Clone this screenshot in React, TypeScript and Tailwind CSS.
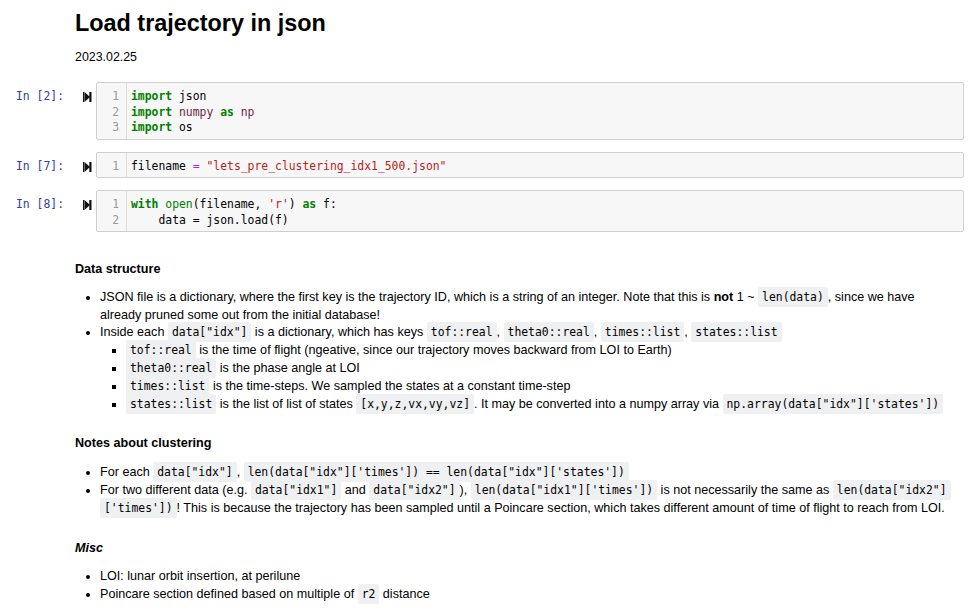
import React from "react";

const mono = "font-['DejaVu_Sans_Mono',monospace]";

function C({ children }: { children: React.ReactNode }) {
  return (
    <code className={`${mono} text-[11.4px] leading-none bg-[#eff0f1] px-[4px] py-[3px] rounded-[2px] text-black`}>
      {children}
    </code>
  );
}

function RunIcon() {
  return (
    <svg width="9" height="10" viewBox="0 0 9 10" className="mt-[4px]">
      <rect x="0" y="0" width="1.2" height="10" fill="#111" />
      <path d="M1.5 0 L7 5 L1.5 10 Z" fill="#111" />
      <rect x="6.3" y="0" width="2.2" height="10" fill="#111" />
    </svg>
  );
}

function Cell({ n, lines }: { n: number; lines: React.ReactNode[] }) {
  return (
    <div className="flex items-start pl-[16px] pr-[11px]">
      <div className={`${mono} w-[67px] pt-[7px] text-[11.4px] leading-[15.5px] text-[#303F9F] whitespace-pre`}>
        {`In [${n}]:`}
      </div>
      <div className="w-[13px] pt-[6px]">
        <RunIcon />
      </div>
      <div className="flex-1 flex border border-[#cfcfcf] bg-[#f7f7f7] rounded-[2px]">
        <div className={`${mono} w-[30px] border-r border-[#dddddd] pt-[6px] pb-[3px] pr-[7px] text-right text-[11.4px] leading-[15.5px] text-[#999]`}>
          {lines.map((_, i) => (
            <div key={i}>{i + 1}</div>
          ))}
        </div>
        <div className={`${mono} flex-1 pt-[6px] pb-[3px] pl-[4px] text-[11.4px] leading-[15.5px] text-black whitespace-pre`}>
          {lines.map((l, i) => (
            <div key={i}>{l}</div>
          ))}
        </div>
      </div>
    </div>
  );
}

const K = ({ children }: { children: React.ReactNode }) => (
  <span className="text-[#008000] font-bold">{children}</span>
);
const M = ({ children }: { children: React.ReactNode }) => (
  <span className="text-[#6e1f45]">{children}</span>
);

export default function App() {
  return (
    <div className="w-[975px] h-[615px] overflow-hidden bg-white text-black font-['Liberation_Sans',Arial,sans-serif]">
      <div className="pl-[75px] pt-[9px]">
        <h1 className="text-[23.4px] leading-[28px] font-bold">Load trajectory in json</h1>
        <p className="mt-[11px] text-[12.4px] leading-[18px]">2023.02.25</p>
      </div>

      <div className="mt-[16px] flex flex-col gap-[12px]">
        <Cell
          n={2}
          lines={[
            <><K>import</K> json</>,
            <><K>import</K> <M>numpy</M> <K>as</K> <M>np</M></>,
            <><K>import</K> os</>,
          ]}
        />
        <Cell
          n={7}
          lines={[
            <>filename <span className="text-[#AA22FF]">=</span> <span className="text-[#BA2121]">"lets_pre_clustering_idx1_500.json"</span></>,
          ]}
        />
        <Cell
          n={8}
          lines={[
            <><K>with</K> <span className="text-[#008000]">open</span>(filename, <span className="text-[#BA2121]">'r'</span>) <K>as</K> f:</>,
            <>    data = json.load(f)</>,
          ]}
        />
      </div>

      <div className="pl-[75px] pr-[11px] mt-[29px] text-[12.6px] leading-[17.8px]">
        <h4 className="font-bold">Data structure</h4>
        <ul className="mt-[10px] list-disc pl-[25px]">
          <li>
            JSON file is a dictionary, where the first key is the trajectory ID, which is a string of an integer. Note that this is <b>not</b> 1 ~ <C>len(data)</C>, since we have
            <br />
            already pruned some out from the initial database!
          </li>
          <li>
            Inside each <C>data["idx"]</C> is a dictionary, which has keys <C>tof::real</C>, <C>theta0::real</C>, <C>times::list</C>, <C>states::list</C>
            <ul className="list-[square] pl-[26px]">
              <li>
                <C>tof::real</C> is the time of flight (ngeative, since our trajectory moves backward from LOI to Earth)
              </li>
              <li>
                <C>theta0::real</C> is the phase angle at LOI
              </li>
              <li>
                <C>times::list</C> is the time-steps. We sampled the states at a constant time-step
              </li>
              <li>
                <C>states::list</C> is the list of list of states <C>[x,y,z,vx,vy,vz]</C>. It may be converted into a numpy array via <C>np.array(data["idx"]['states'])</C>
              </li>
            </ul>
          </li>
        </ul>

        <h4 className="mt-[22px] font-bold">Notes about clustering</h4>
        <ul className="mt-[11px] list-disc pl-[25px]">
          <li>
            For each <C>data["idx"]</C>, <C>len(data["idx"]['times']) == len(data["idx"]['states'])</C>
          </li>
          <li>
            For two different data (e.g. <C>data["idx1"]</C> and <C>data["idx2"]</C>), <C>len(data["idx1"]['times'])</C> is not necessarily the same as <C>len(data["idx2"]</C>
            <br />
            <C>['times'])</C>! This is because the trajectory has been sampled until a Poincare section, which takes different amount of time of flight to reach from LOI.
          </li>
        </ul>

        <h4 className="mt-[22px] font-bold italic">Misc</h4>
        <ul className="mt-[11px] list-disc pl-[25px]">
          <li>LOI: lunar orbit insertion, at perilune</li>
          <li>
            Poincare section defined based on multiple of <C>r2</C> distance
          </li>
        </ul>
      </div>
    </div>
  );
}
